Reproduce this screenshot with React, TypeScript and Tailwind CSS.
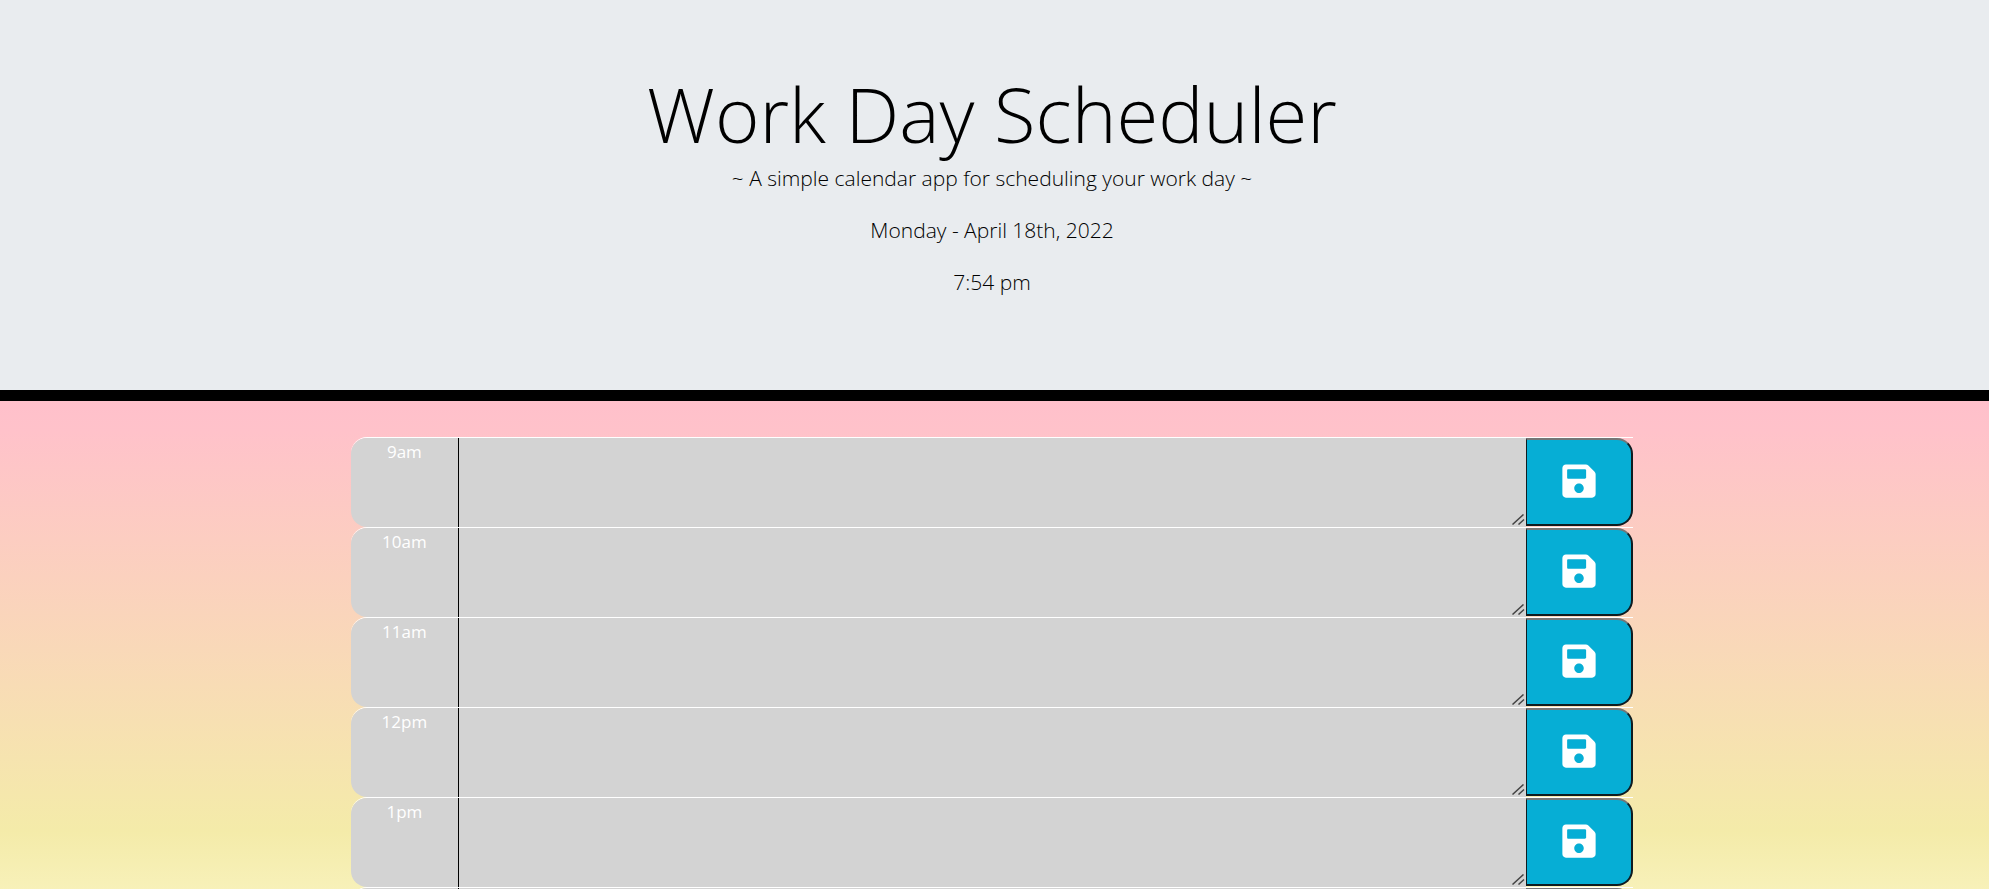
import { FaSave } from "react-icons/fa";

const hours = ["9am", "10am", "11am", "12pm", "1pm", "2pm", "3pm", "4pm", "5pm"];

function ResizeGrip() {
  return (
    <svg
      viewBox="0 0 13 11"
      className="pointer-events-none absolute right-px bottom-0.5 h-[11px] w-[13px]"
      fill="none"
      stroke="#444"
      strokeWidth="1.5"
      aria-hidden="true"
    >
      <path d="M0.5 10.5 L11.5 0.5 M6.5 10.5 L12 5.5" />
    </svg>
  );
}

function TimeBlock({ hour }: { hour: string }) {
  const id = `task-${hour}`;
  return (
    <div className="flex h-[90px] rounded-l-2xl border-t border-white">
      <label
        htmlFor={id}
        className="w-1/12 shrink-0 rounded-l-2xl bg-[#d3d3d3] text-center text-[17px] leading-7 text-white"
      >
        {hour}
      </label>
      <div className="relative flex min-w-0 flex-1">
        <textarea
          id={id}
          className="w-full resize-none border-l border-black bg-[#d3d3d3] px-2 py-1 text-lg outline-none"
        />
        <ResizeGrip />
      </div>
      <button
        type="button"
        aria-label={`Save ${hour}`}
        className="mb-px flex w-[107px] shrink-0 items-center justify-center rounded-r-2xl border-2 border-l border-[#101c20] border-t-[#767676] bg-[#06aed5] pb-0.5 text-white"
      >
        <FaSave className="size-[38px]" />
      </button>
    </div>
  );
}

export default function App() {
  return (
    <div className="min-h-screen font-['Open_Sans','Noto_Sans',sans-serif]">
      <header className="border-b-[11px] border-black bg-[#e9ecef] pt-[66px] pr-[5px] pb-[92px] text-center font-light text-black">
        <h1 className="text-[76px] leading-[96px]">Work Day Scheduler</h1>
        <p className="text-[21px] leading-8">~ A simple calendar app for scheduling your work day ~</p>
        <p className="mt-5 text-[21px] leading-8">Monday - April 18th, 2022</p>
        <p className="mt-5 text-[21px] leading-8">7:54 pm</p>
      </header>
      <main className="bg-[linear-gradient(to_bottom,#ffc0cb_0px,#ffc2ca_30px,#f4eba9_430px,#f8f2bc_500px,#ffffff_900px)] pt-9 pr-[5px] pb-9">
        <div className="mx-auto w-full max-w-[1282px]">
          {hours.map((hour) => (
            <TimeBlock key={hour} hour={hour} />
          ))}
        </div>
      </main>
    </div>
  );
}
